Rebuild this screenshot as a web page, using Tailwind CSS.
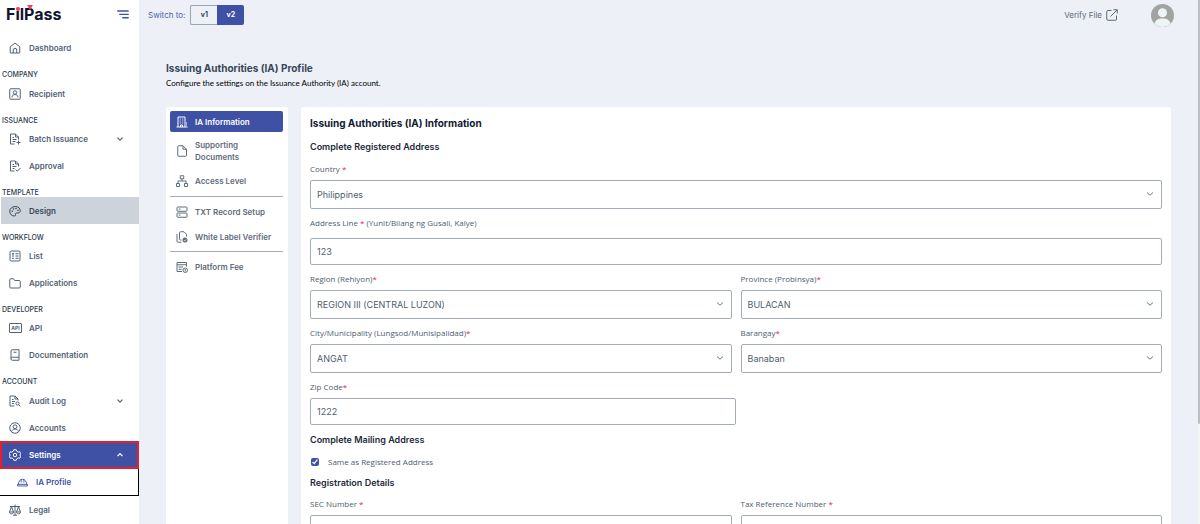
<!DOCTYPE html>
<html lang="en">
<head>
    <meta charset="UTF-8">
    <meta name="viewport" content="width=device-width, initial-scale=1.0">
    <script src="https://cdn.jsdelivr.net/npm/@tailwindcss/browser@4"></script>
    <title>FilPass - IA Profile</title>
</head>
<body class="h-screen overflow-hidden flex bg-[#edf0f6] font-['Open_Sans',sans-serif] text-[8px] text-[#4f5d6e]">

    <!-- Sidebar -->
    <aside class="w-[139px] shrink-0 h-full overflow-hidden bg-white font-['Inter',sans-serif]">
        <div class="h-[34px] pl-[6px] pr-[10px] pb-[6px] flex items-center justify-between">
            <a href="#" class="relative text-[16px] leading-5 font-bold text-[#10152f]">FilPass
                <svg class="absolute left-0 top-0 w-[57px] h-5" viewBox="0 0 57 20">
                    <circle cx="12" cy="5" r="2" fill="#f0455a"/>
                    <path d="M21 1h6l-3 5z" fill="#f0455a"/>
                </svg>
            </a>
            <button type="button" aria-label="Toggle menu">
                <svg class="w-3 h-[9px]" viewBox="0 0 12 9" fill="none" stroke="#3f51a5" stroke-width="1.4" stroke-linecap="round"><path d="M.8 1h10.400M2.800 4.400h8.400M5.800 7.800h5.400"/></svg>
            </button>
        </div>

        <nav class="font-semibold text-[#536273]">
            <a href="#" class="h-[27px] pl-[9px] flex items-center gap-2">
                <svg class="w-3 h-3" viewBox="0 0 24 24" fill="none" stroke="currentColor" stroke-width="2" stroke-linejoin="round"><path d="M2.500 9.500 12 2l9.500 7.500V22h-19zM8.500 22v-6a3.500 3.500 0 0 1 7 0v6"/></svg>
                Dashboard
            </a>

            <h2 class="h-[19px] pl-[2px] pt-[9px] text-[7px] leading-[10px] font-medium text-[#2c3a4a]">COMPANY</h2>
            <a href="#" class="h-[27px] pl-[9px] flex items-center gap-2">
                <svg class="w-3 h-3" viewBox="0 0 24 24" fill="none" stroke="currentColor" stroke-width="2"><rect x="1.500" y="1.500" width="21" height="21" rx="2"/><circle cx="12" cy="9" r="3.500"/><path d="M6 19c0-4 2.500-6 6-6s6 2 6 6"/></svg>
                Recipient
            </a>

            <h2 class="h-[18px] pl-[2px] pt-[9px] text-[7px] leading-[10px] font-medium text-[#2c3a4a]">ISSUANCE</h2>
            <button type="button" class="w-full h-[27px] pl-[9px] pr-[15px] flex items-center gap-2">
                <svg class="w-3 h-3" viewBox="0 0 24 24" fill="none" stroke="currentColor" stroke-width="2"><path d="M11 22H3V2h10l6 6v5M13 2v6h6M7 9h3M7 13h8M7 17h6M19 15v8M15 19h8"/></svg>
                Batch Issuance
                <svg class="ml-auto w-2 h-2" viewBox="0 0 8 8" fill="none" stroke="currentColor" stroke-width="1.2"><path d="M1.500 2.700 4 5.200l2.500-2.500"/></svg>
            </button>
            <a href="#" class="h-[27px] pl-[9px] flex items-center gap-2">
                <svg class="w-3 h-3" viewBox="0 0 24 24" fill="none" stroke="currentColor" stroke-width="2"><path d="M11 22H3V2h10l6 6v5M13 2v6h6M7 9h3M7 13h8M7 17h4M13 19l3.500 3.500L23 16"/></svg>
                Approval
            </a>

            <h2 class="h-[18px] pl-[2px] pt-[9px] text-[7px] leading-[10px] font-medium text-[#2c3a4a]">TEMPLATE</h2>
            <a href="#" class="ml-px h-[27px] pl-2 flex items-center gap-2 bg-[#ccd3db] text-[#3a4858]">
                <svg class="w-3 h-3" viewBox="0 0 24 24" fill="none" stroke="currentColor" stroke-width="2"><path d="M11 22C5 22 1.500 17.500 1.500 12.500S6 3 12.500 3 22.500 7 22.500 11.500c0 3-2 4.500-4.500 4.500h-3c-2 0-2.500 1.500-2 3s0 3-2 3z"/><g fill="currentColor" stroke="none"><circle cx="6.500" cy="12.500" r="1.600"/><circle cx="9" cy="8" r="1.600"/><circle cx="14" cy="7" r="1.600"/><circle cx="18" cy="10.500" r="1.600"/></g></svg>
                Design
            </a>

            <h2 class="h-[18px] pl-[2px] pt-[9px] text-[7px] leading-[10px] font-medium text-[#2c3a4a]">WORKFLOW</h2>
            <a href="#" class="h-[27px] pl-[9px] flex items-center gap-2">
                <svg class="w-3 h-3" viewBox="0 0 24 24" fill="none" stroke="currentColor" stroke-width="2"><rect x="2" y="2" width="20" height="20" rx="2.500"/><path d="M6 7.500h4M6 12h4M6 16.500h4M8 5.500v4M13 7.500h6M13 12h6M13 16.500h6"/></svg>
                List
            </a>
            <a href="#" class="h-[27px] pl-[9px] flex items-center gap-2">
                <svg class="w-3 h-3" viewBox="0 0 24 24" fill="none" stroke="currentColor" stroke-width="2" stroke-linejoin="round"><path d="M1.500 5.500a2 2 0 0 1 2-2H9l2.500 3.500h9a2 2 0 0 1 2 2v11a2 2 0 0 1-2 2h-17a2 2 0 0 1-2-2z"/></svg>
                Applications
            </a>

            <h2 class="h-[18px] pl-[2px] pt-[9px] text-[7px] leading-[10px] font-medium text-[#2c3a4a]">DEVELOPER</h2>
            <a href="#" class="h-[27px] pl-[9px] flex items-center gap-[7px]">
                <svg class="w-[13px] h-[10px]" viewBox="0 0 26 20" fill="none" stroke="currentColor"><rect x="1" y="1" width="24" height="18" rx="1" stroke-width="2"/><text x="13" y="13.500" font-size="10" font-weight="700" text-anchor="middle" fill="currentColor" stroke="none">API</text></svg>
                API
            </a>
            <a href="#" class="h-[27px] pl-[9px] flex items-center gap-2">
                <svg class="w-3 h-3" viewBox="0 0 24 24" fill="none" stroke="currentColor" stroke-width="2"><path d="M4 19V4a2.500 2.500 0 0 1 2.500-2.500H20v21H6.500A2.500 2.500 0 0 1 4 20a3 3 0 0 1 3-3.500h13M9 6.500h6"/></svg>
                Documentation
            </a>

            <h2 class="h-[19px] pl-[2px] pt-[9px] text-[7px] leading-[10px] font-medium text-[#2c3a4a]">ACCOUNT</h2>
            <button type="button" class="w-full h-[27px] pl-[9px] pr-[15px] flex items-center gap-2">
                <svg class="w-3 h-3" viewBox="0 0 24 24" fill="none" stroke="currentColor" stroke-width="2"><path d="M11 22H2V2h10l6 6v3M12 2v6h6M6 9h3M6 13h6M6 17h4"/><circle cx="17" cy="17" r="3.200"/><path d="m19.500 19.500 3.500 3.500"/></svg>
                Audit Log
                <svg class="ml-auto w-2 h-2" viewBox="0 0 8 8" fill="none" stroke="currentColor" stroke-width="1.2"><path d="M1.500 2.700 4 5.200l2.500-2.500"/></svg>
            </button>
            <a href="#" class="h-[27px] pl-[9px] flex items-center gap-2">
                <svg class="w-3 h-3" viewBox="0 0 24 24" fill="none" stroke="currentColor" stroke-width="2"><circle cx="12" cy="12" r="10.500"/><circle cx="12" cy="9.500" r="3.800"/><path d="M5 19.500c1-3.800 3.500-5.500 7-5.500s6 1.700 7 5.500"/></svg>
                Accounts
            </a>
            <button type="button" class="w-full h-[28px] pl-[7px] pr-[13px] flex items-center gap-2 border-2 border-[#e3202b] bg-[#3f51a5] text-white">
                <svg class="w-3 h-3" viewBox="0 0 24 24" fill="none" stroke="currentColor" stroke-width="2" stroke-linejoin="round"><path d="M9.500 1.500h5l1 3 3 1.700 3-.7 2 4-2 2.500 2 2.500-2 4-3-.7-3 1.700-1 3h-5l-1-3-3-1.700-3 .7-2-4 2-2.500-2-2.500 2-4 3 .7 3-1.700z"/><circle cx="12" cy="12" r="3.500"/></svg>
                Settings
                <svg class="ml-auto w-2 h-2" viewBox="0 0 8 8" fill="none" stroke="currentColor" stroke-width="1.2"><path d="M1.500 5.200 4 2.700l2.500 2.500"/></svg>
            </button>
            <a href="#" class="h-[27px] pl-[17px] flex items-center gap-2 border-r border-b border-black text-[#3f51a5]">
                <svg class="w-[11px] h-[11px]" viewBox="0 0 24 24" fill="none" stroke="currentColor" stroke-width="2" stroke-linejoin="round"><path d="M3 16c0-6 3.500-11 9-11s9 5 9 11M1 16h22v3.500H1zM9 5.500V12M15 5.500V12"/></svg>
                IA Profile
            </a>
            <a href="#" class="h-[27px] pl-[9px] flex items-center gap-2">
                <svg class="w-3 h-3" viewBox="0 0 24 24" fill="none" stroke="currentColor" stroke-width="2" stroke-linejoin="round"><path d="M12 1v21M8 22.500h8M2 5h20M5 5l-4 11c0 5 8 5 8 0zM19 5l-4 11c0 5 8 5 8 0zM1 16h8M15 16h8"/></svg>
                Legal
            </a>
        </nav>
    </aside>

    <main class="flex-1 min-w-0 h-full overflow-hidden pl-[27px] pr-[29px]">
        <!-- Top bar -->
        <header class="h-[30px] -ml-[18px] -mr-[3px] flex items-center font-['Inter',sans-serif]">
            <span class="text-[#4a5fae]">Switch to:</span>
            <div class="ml-[5px] flex h-5 font-bold">
                <button type="button" class="w-[27px] flex items-center justify-center rounded-l-[2px] border border-r-0 border-[#9aa6b5] text-[7px] text-[#36465a]">v1</button>
                <button type="button" class="w-[27px] flex items-center justify-center rounded-r-[2px] bg-[#3f51a5] text-[7px] text-white">v2</button>
            </div>
            <a href="#" class="ml-auto flex items-center gap-1 text-[#5c6a7a]">
                Verify File
                <svg class="w-3 h-3" viewBox="0 0 24 24" fill="none" stroke="currentColor" stroke-width="2"><path d="M11 3H4a2.500 2.500 0 0 0-2.500 2.500V20A2.500 2.500 0 0 0 4 22.500h14.500A2.500 2.500 0 0 0 21 20v-7M15 1.500h7.500V9M22.500 1.500 9 15"/></svg>
            </a>
            <button type="button" class="ml-[33px]" aria-label="Account">
                <svg class="w-[23px] h-[23px]" viewBox="0 0 46 46"><circle cx="23" cy="23" r="23" fill="#a3a3a3"/><circle cx="23" cy="17.500" r="9" fill="#edf5f3"/><path d="M7 39.500C9 31 15 29 23 29s14 2 16 10.500C30 48 16 48 7 39.500z" fill="#edf5f3"/></svg>
            </button>
        </header>

        <h1 class="mt-8 text-[10px] leading-3 font-bold text-[#36465a] font-['Inter',sans-serif]">Issuing Authorities (IA) Profile</h1>
        <p class="mt-[3px] leading-3 text-black font-['Lato',sans-serif]">Configure the settings on the Issuance Authority (IA) account.</p>

        <div class="mt-[18px] flex gap-[13px]">
            <!-- Profile tabs -->
            <nav class="w-[122px] shrink-0 min-h-screen rounded-t-[2px] bg-white pl-1 pr-[5px] pt-1 font-['Inter',sans-serif] font-semibold leading-3 text-[#5f6c7b]">
                <a href="#" class="h-[21px] pl-[6px] flex items-center gap-[7px] rounded-[2px] bg-[#3f51a5] text-white">
                    <svg class="w-3 h-3" viewBox="0 0 24 24" fill="none" stroke="currentColor" stroke-width="2"><path d="M4 22V2h14v20M1 22h22M21 13v2M21 17v2M9 22v-4h4v4M7.500 6h2M12.500 6h2M7.500 10h2M12.500 10h2M7.500 14h2M12.500 14h2"/></svg>
                    IA Information
                </a>
                <a href="#" class="h-[36px] pt-[2px] pl-[6px] flex items-center gap-[7px]">
                    <svg class="w-3 h-3 shrink-0" viewBox="0 0 24 24" fill="none" stroke="currentColor" stroke-width="2" stroke-linejoin="round"><path d="M3.500 3.500a2 2 0 0 1 2-2H14l7 7v12a2 2 0 0 1-2 2H5.500a2 2 0 0 1-2-2zM14 1.500v7h7"/></svg>
                    Supporting Documents
                </a>
                <a href="#" class="h-[26px] pl-[6px] flex items-center gap-[7px]">
                    <svg class="w-3 h-3" viewBox="0 0 24 24" fill="none" stroke="currentColor" stroke-width="2"><path d="M8.500 1.500h7v6h-7zM1 17h6v6H1zM17 17h6v6h-6zM12 7.500V12M4 17v-5h16v5"/></svg>
                    Access Level
                </a>
                <hr class="my-[2px] border-[#a5afbb]">
                <a href="#" class="h-[25px] pl-[6px] flex items-center gap-[7px]">
                    <svg class="w-3 h-3" viewBox="0 0 24 24" fill="none" stroke="currentColor" stroke-width="2"><rect x="2" y="2" width="20" height="8.500" rx="1.500"/><rect x="2" y="14" width="20" height="8.500" rx="1.500"/><path d="M5.500 6.200H9M5.500 18.200H9"/></svg>
                    TXT Record Setup
                </a>
                <a href="#" class="h-[25px] pl-[6px] flex items-center gap-[7px]">
                    <svg class="w-3 h-3" viewBox="0 0 24 24" fill="none" stroke="currentColor" stroke-width="2"><path d="M11 18H9a2 2 0 0 1-2-2V3.500a2 2 0 0 1 2-2h7l5 5V11M2 6v14a2.500 2.500 0 0 0 2.500 2.500H11"/><circle cx="18" cy="18" r="5" fill="currentColor" stroke="none"/><path d="m15.500 18 2 2 3-3.500" stroke="#fff" stroke-width="1.500"/></svg>
                    White Label Verifier
                </a>
                <hr class="my-[2px] border-[#a5afbb]">
                <a href="#" class="h-[25px] pl-[6px] flex items-center gap-[7px]">
                    <svg class="w-3 h-3" viewBox="0 0 24 24" fill="none" stroke="currentColor" stroke-width="2"><path d="M12 21H2V3h19v8M2 7.500h19M5 12h9M5 16.500h6"/><circle cx="18.500" cy="18.500" r="4.500"/><path d="M18.500 16v5"/></svg>
                    Platform Fee
                </a>
            </nav>

            <!-- IA form -->
            <form class="flex-1 min-w-0 min-h-screen rounded-t-[2px] bg-white px-[9px] pt-[10px]">
                <h2 class="text-[10px] leading-3 font-bold text-[#111a33] font-['Inter',sans-serif]">Issuing Authorities (IA) Information</h2>
                <h3 class="mt-3 text-[9px] leading-3 font-semibold text-[#1e2a3a] font-['Inter',sans-serif]">Complete Registered Address</h3>

                <label for="country" class="mt-[10px] block leading-3">Country <span class="text-[#e0244f]">*</span></label>
                <div class="mt-[5px] relative">
                    <select id="country" class="block w-full h-[29px] px-[6px] appearance-none rounded-[2px] border border-[#a3adb9] bg-white text-[9px] font-['Inter',sans-serif]"><option>Philippines</option></select>
                    <svg class="absolute right-[8px] top-[10px] w-2 h-2 pointer-events-none" viewBox="0 0 8 8" fill="none" stroke="#6b7888"><path d="M1 2.500 4 5.200l3-2.700"/></svg>
                </div>

                <label for="address" class="mt-2 block leading-3">Address Line <span class="text-[#e0244f]">*</span> (Yunit/Bilang ng Gusali, Kalye)</label>
                <input id="address" type="text" value="123" class="mt-[9px] block w-full h-[27px] px-[6px] rounded-[2px] border border-[#a3adb9] text-[9px] font-['Inter',sans-serif]">

                <div class="mt-2 grid grid-cols-2 gap-x-[9px] gap-y-2">
                    <div>
                        <label for="region" class="block leading-3">Region (Rehiyon)<span class="text-[#e0244f]">*</span></label>
                        <div class="mt-[5px] relative">
                            <select id="region" class="block w-full h-[29px] px-[6px] appearance-none rounded-[2px] border border-[#a3adb9] bg-white text-[9px] font-['Inter',sans-serif]"><option>REGION III (CENTRAL LUZON)</option></select>
                            <svg class="absolute right-[8px] top-[10px] w-2 h-2 pointer-events-none" viewBox="0 0 8 8" fill="none" stroke="#6b7888"><path d="M1 2.500 4 5.200l3-2.700"/></svg>
                        </div>
                    </div>
                    <div>
                        <label for="province" class="block leading-3">Province (Probinsya)<span class="text-[#e0244f]">*</span></label>
                        <div class="mt-[5px] relative">
                            <select id="province" class="block w-full h-[29px] px-[6px] appearance-none rounded-[2px] border border-[#a3adb9] bg-white text-[9px] font-['Inter',sans-serif]"><option>BULACAN</option></select>
                            <svg class="absolute right-[8px] top-[10px] w-2 h-2 pointer-events-none" viewBox="0 0 8 8" fill="none" stroke="#6b7888"><path d="M1 2.500 4 5.200l3-2.700"/></svg>
                        </div>
                    </div>
                    <div>
                        <label for="city" class="block leading-3">City/Municipality (Lungsod/Munisipalidad)<span class="text-[#e0244f]">*</span></label>
                        <div class="mt-[5px] relative">
                            <select id="city" class="block w-full h-[29px] px-[6px] appearance-none rounded-[2px] border border-[#a3adb9] bg-white text-[9px] font-['Inter',sans-serif]"><option>ANGAT</option></select>
                            <svg class="absolute right-[8px] top-[10px] w-2 h-2 pointer-events-none" viewBox="0 0 8 8" fill="none" stroke="#6b7888"><path d="M1 2.500 4 5.200l3-2.700"/></svg>
                        </div>
                    </div>
                    <div>
                        <label for="barangay" class="block leading-3">Barangay<span class="text-[#e0244f]">*</span></label>
                        <div class="mt-[5px] relative">
                            <select id="barangay" class="block w-full h-[29px] px-[6px] appearance-none rounded-[2px] border border-[#a3adb9] bg-white text-[9px] font-['Inter',sans-serif]"><option>Banaban</option></select>
                            <svg class="absolute right-[8px] top-[10px] w-2 h-2 pointer-events-none" viewBox="0 0 8 8" fill="none" stroke="#6b7888"><path d="M1 2.500 4 5.200l3-2.700"/></svg>
                        </div>
                    </div>
                </div>

                <label for="zip" class="mt-2 block leading-3">Zip Code<span class="text-[#e0244f]">*</span></label>
                <input id="zip" type="text" value="1222" class="mt-[5px] block w-1/2 h-[27px] px-[6px] rounded-[2px] border border-[#a3adb9] text-[9px] font-['Inter',sans-serif]">

                <h3 class="mt-[9px] text-[9px] leading-3 font-semibold text-[#1e2a3a] font-['Inter',sans-serif]">Complete Mailing Address</h3>
                <div class="mt-[10px] pl-[1px] flex items-center">
                    <input id="same" type="checkbox" checked class="w-2 h-2 accent-[#3f51a5]">
                    <label for="same" class="ml-[9px] leading-3">Same as Registered Address</label>
                </div>
                <h3 class="mt-[9px] text-[9px] leading-3 font-semibold text-[#1e2a3a] font-['Inter',sans-serif]">Registration Details</h3>

                <div class="mt-[9px] grid grid-cols-2 gap-x-[9px]">
                    <div>
                        <label for="sec" class="block leading-3">SEC Number <span class="text-[#e0244f]">*</span></label>
                        <input id="sec" type="text" class="mt-[5px] block w-full h-[27px] px-[6px] rounded-[2px] border border-[#a3adb9] text-[9px]">
                    </div>
                    <div>
                        <label for="tax" class="block leading-3">Tax Reference Number <span class="text-[#e0244f]">*</span></label>
                        <input id="tax" type="text" class="mt-[5px] block w-full h-[27px] px-[6px] rounded-[2px] border border-[#a3adb9] text-[9px]">
                    </div>
                </div>
            </form>
        </div>
    </main>

    <!-- Scrollbar -->
    <div class="fixed right-0 inset-y-0 w-[2px] bg-[#f5f5f5]">
        <div class="h-[81%] rounded-b-full bg-[#bcbec1]"></div>
    </div>
</body>
</html>
